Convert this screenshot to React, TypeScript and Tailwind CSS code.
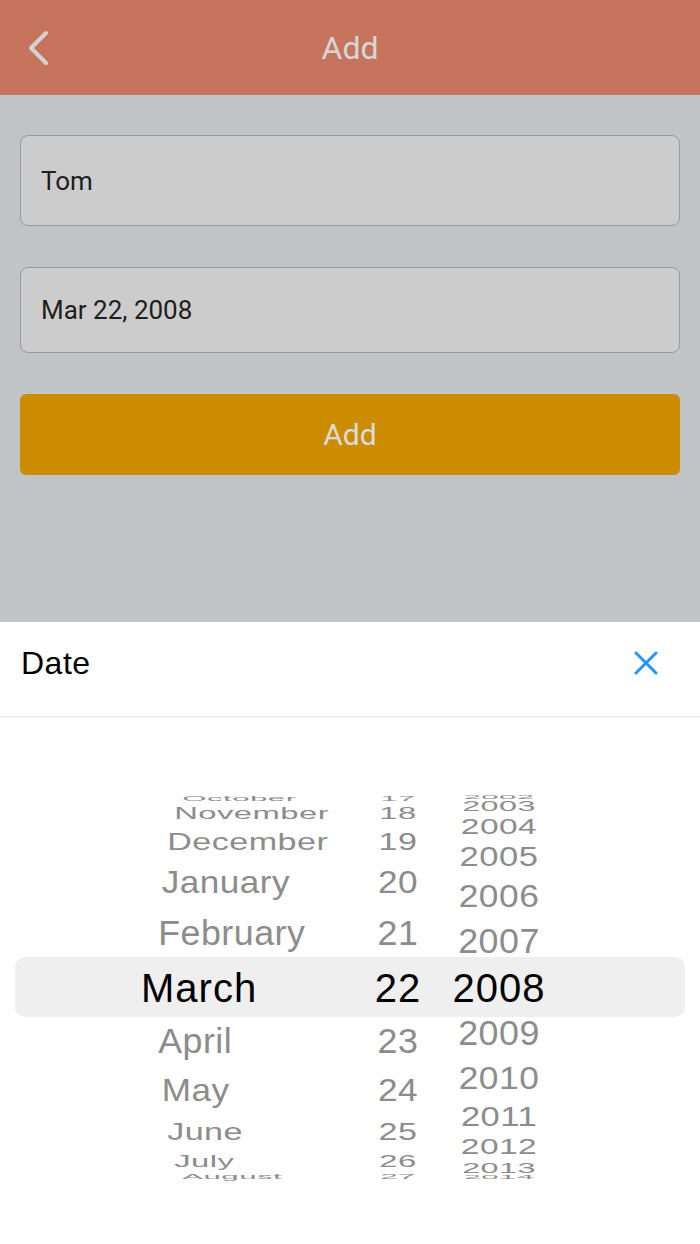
import React from 'react';

// wheel geometry (px / degrees)
const R = 192;
const CENTER_Y = 271;

type Item = { label: string; k: number };

const months: Item[] = ['October', 'November', 'December', 'January', 'February', 'March', 'April', 'May', 'June', 'July', 'August'].map(
  (label, i) => ({ label, k: i - 5 })
);
const days: Item[] = Array.from({ length: 11 }, (_, i) => ({ label: String(17 + i), k: i - 5 }));
const years: Item[] = Array.from({ length: 13 }, (_, i) => ({ label: String(2002 + i), k: i - 6 }));

function wheelStyle(k: number, step: number, align: 'left' | 'center', x: number): React.CSSProperties {
  const rad = (k * step * Math.PI) / 180;
  const cos = Math.cos(rad);
  const sx = 0.85 + 0.15 * cos;
  const sy = 0.1 + 0.9 * cos;
  const lh = k === 0 ? 48 : 44;
  const top = CENTER_Y + R * Math.sin(rad) - lh / 2 - (k > 0 ? 2 : 0);
  if (align === 'left') {
    return {
      top,
      left: x,
      lineHeight: `${lh}px`,
      transform: `scale(${sx}, ${sy})`,
      transformOrigin: `${350 - x}px 50%`,
    };
  }
  return {
    top,
    left: x,
    lineHeight: `${lh}px`,
    transform: `translateX(-50%) scale(${sx}, ${sy})`,
  };
}

function Column({ items, step, align, x, selectedX }: { items: Item[]; step: number; align: 'left' | 'center'; x: number; selectedX?: number }) {
  return (
    <>
      {items.map(it => (
        <span
          key={it.label}
          className={
            it.k === 0
              ? 'absolute whitespace-nowrap text-[40px] tracking-[1px] text-black'
              : 'absolute whitespace-nowrap text-[36px] tracking-[0.5px] text-[#8c8c8c]'
          }
          style={wheelStyle(it.k, step, align, it.k === 0 && selectedX !== undefined ? selectedX : x)}
        >
          {it.label}
        </span>
      ))}
    </>
  );
}

function App() {
  return (
    <div className="w-[700px] h-[1244px] overflow-hidden bg-white flex flex-col">
      {/* page behind the sheet */}
      <div className="h-[622px] bg-[#c0c4c7] flex flex-col font-['Roboto',sans-serif]">
        <div className="h-[95px] bg-[#c6745d] flex items-center relative">
          <svg className="ml-[26px]" width="24" height="36" viewBox="0 0 24 36" fill="none">
            <path d="M20 3 L5 18 L20 33" stroke="#d3d3d3" strokeWidth="4" strokeLinecap="round" strokeLinejoin="round" />
          </svg>
          <div className="absolute inset-0 flex items-center justify-center text-[32px] text-[#d6d6d6] pointer-events-none">
            Add
          </div>
        </div>

        <div className="px-[20px] pt-[40px] flex flex-col gap-[41px]">
          <div className="h-[91px] bg-[#cccccc] border border-[#9a9a9a] rounded-lg flex items-center pl-[20px] pt-[2px] text-[26px] text-[#1e1e1e]">
            Tom
          </div>
          <div className="h-[86px] bg-[#cccccc] border border-[#9a9a9a] rounded-lg flex items-center pl-[20px] text-[26px] text-[#1e1e1e]">
            Mar 22, 2008
          </div>
          <div className="h-[81px] bg-[#cc8c00] rounded-md flex items-center justify-center text-[30px] text-[#dcdcdc]">
            Add
          </div>
        </div>
      </div>

      {/* date sheet */}
      <div className="flex-1 flex flex-col font-['Liberation_Sans',Arial,sans-serif]">
        <div className="h-[95px] border-b border-[#e6e6e6] flex items-center justify-between pl-[21px] pr-[42px] pb-[12px]">
          <span className="text-[32px] tracking-[0.5px] text-black">Date</span>
          <svg width="24" height="24" viewBox="0 0 24 24" fill="none">
            <path d="M2 2 L22 22 M22 2 L2 22" stroke="#2196f3" strokeWidth="3" strokeLinecap="round" />
          </svg>
        </div>

        <div className="relative flex-1 pt-[240px] overflow-hidden">
          <div className="mx-[15px] h-[60px] rounded-[10px] bg-[#efefef]" />
          <Column items={months} step={16.5} align="left" x={157} selectedX={141} />
          <Column items={days} step={16.5} align="center" x={398} />
          <Column items={years} step={14.3} align="center" x={499} />
        </div>
      </div>
    </div>
  );
}

export default App
